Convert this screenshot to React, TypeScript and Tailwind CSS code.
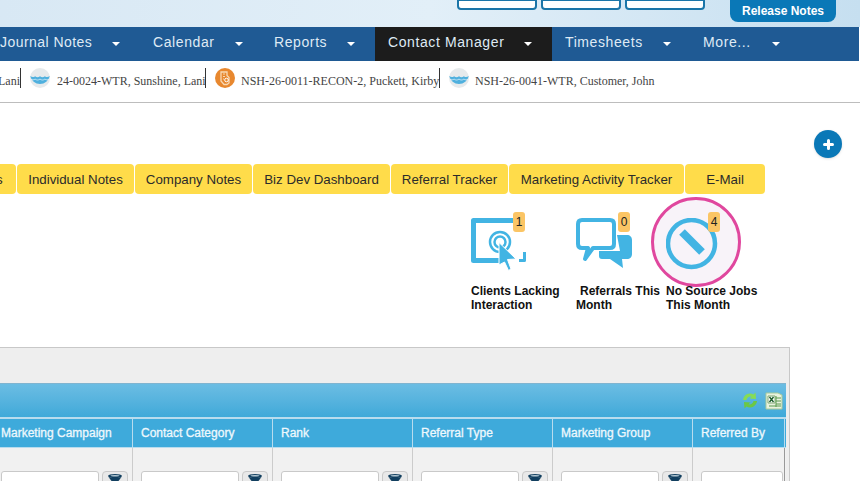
const navItems = [
  { label: "Journal Notes", className: "w-[139px] tracking-[0.45px]", caretGap: "ml-[20px]" },
  { label: "Calendar", className: "w-[122px] pl-[14px] tracking-[0.6px]", caretGap: "ml-[20px]" },
  { label: "Reports", className: "w-[114px] pl-[13px] tracking-[0.6px]", caretGap: "ml-[20px]" },
  { label: "Contact Manager", className: "w-[177px] pl-[13px] tracking-[0.6px] bg-[#1c1c1c]", caretGap: "ml-[20px]" },
  { label: "Timesheets", className: "w-[138px] pl-[13px] tracking-[0.6px]", caretGap: "ml-[20px]" },
  { label: "More...", className: "w-[169px] pl-[13px] tracking-[0.6px]", caretGap: "ml-[21px]" },
];

const tabs = [
  { label: "s", width: "w-[16px] justify-start -indent-[4px] rounded-l-none" },
  { label: "Individual Notes", width: "w-[117px] justify-center" },
  { label: "Company Notes", width: "w-[117px] justify-center" },
  { label: "Biz Dev Dashboard", width: "w-[137px] justify-center" },
  { label: "Referral Tracker", width: "w-[117px] justify-center" },
  { label: "Marketing Activity Tracker", width: "w-[175px] justify-center" },
  { label: "E-Mail", width: "w-[80px] justify-center" },
];

const columns = [
  { label: "Marketing Campaign", filter: true, width: "w-[133px] pl-[1px]" },
  { label: "Contact Category", filter: true, width: "w-[140px] pl-[8px]" },
  { label: "Rank", filter: true, width: "w-[140px] pl-[8px]" },
  { label: "Referral Type", filter: true, width: "w-[140px] pl-[8px]" },
  { label: "Marketing Group", filter: true, width: "w-[140px] pl-[8px]" },
  { label: "Referred By", filter: false, width: "w-[92px] pl-[8px]" },
];

function WaterIcon() {
  return (
    <svg width="20" height="20" viewBox="0 0 20 20" className="shrink-0">
      <circle cx="10" cy="10" r="10" fill="#e6eaec" />
      <path d="M.2 8c1.900 1.400 3.300 1.400 4.900.2 1.600 1.300 3.200 1.300 4.900 0 1.700 1.300 3.300 1.300 4.900 0 1.600 1.200 3 1.200 4.900-.2a10 10 0 0 1-19.600 0z" fill="#4fb0de" />
      <path d="M1 11.200c1.500.9 2.800.8 4.100-.1 1.600 1.200 3.200 1.200 4.900 0 1.700 1.200 3.300 1.200 4.900 0 1.300.9 2.600 1 4.100.1" fill="none" stroke="#e9f5fb" strokeWidth="0.700" />
    </svg>
  );
}

function ReconIcon() {
  return (
    <svg width="20" height="20" viewBox="0 0 20 20" className="shrink-0">
      <circle cx="10" cy="10" r="10" fill="#e8882f" />
      <path d="M6 4h6v3.500l2 2V15l-2 1.500H9L6 13z" fill="none" stroke="#f8d9b4" strokeWidth="1.300" />
      <path d="M8 6h2M8 8.500h2M8 11h1" stroke="#f8d9b4" strokeWidth="1.100" />
      <circle cx="11.500" cy="12" r="1.800" fill="none" stroke="#fff" strokeWidth="1" />
    </svg>
  );
}

function Caret() {
  return <span className="inline-block w-0 h-0 mt-[3px] border-x-[4px] border-x-transparent border-t-[4px] border-t-white" />;
}

function FilterButton() {
  return (
    <div className="w-[26px] h-[12px] overflow-hidden rounded-t-[4px] border border-[#c9c9c9] bg-[#e9e9e9] flex justify-center pt-[2px]">
      <svg width="16" height="10" viewBox="0 0 16 10">
        <ellipse cx="8" cy="2" rx="7" ry="2" fill="#123f5f" />
        <ellipse cx="8" cy="1.800" rx="4.500" ry="0.800" fill="#b7cbd6" />
        <path d="M1.500 3c2 1 11 1 13 0L10 9H6z" fill="#123f5f" />
      </svg>
    </div>
  );
}

function ClientsIcon() {
  return (
    <svg width="56" height="53" viewBox="0 0 56 53">
      <path d="M33 42.500H2.500V2.500H44" fill="none" stroke="#42b4e3" strokeWidth="5" strokeLinejoin="round" />
      <path d="M53.500 34v8.500H48" fill="none" stroke="#42b4e3" strokeWidth="3" strokeLinejoin="round" />
      <circle cx="29" cy="24" r="10" fill="none" stroke="#42b4e3" strokeWidth="2.500" />
      <circle cx="29" cy="24" r="5.500" fill="none" stroke="#42b4e3" strokeWidth="2.500" />
      <path d="M28 24.500L45 41l-8.500.5L40 51l-2.500 1.500-4-8.500-5.500 3z" fill="#42b4e3" stroke="#fff" strokeWidth="1" strokeLinejoin="round" />
    </svg>
  );
}

function ReferralsIcon() {
  return (
    <svg width="58" height="52" viewBox="0 0 58 52">
      <path d="M41 17h10c3 0 5 2 5 5v14c0 3-2 5-5 5h-5l1 9-13-9h-8c-2 0-3-1-3-3v-5h21z" fill="#42b4e3" />
      <path d="M6 2h28c2.500 0 4 1.500 4 4v20c0 2.500-1.500 4-4 4H17L9 41l3-11H6c-2.500 0-4-1.500-4-4V6c0-2.500 1.500-4 4-4z" fill="#fff" stroke="#fff" strokeWidth="6" strokeLinejoin="round" />
      <path d="M6 2h28c2.500 0 4 1.500 4 4v20c0 2.500-1.500 4-4 4H17L9 41l3-11H6c-2.500 0-4-1.500-4-4V6c0-2.500 1.500-4 4-4z" fill="#fff" stroke="#42b4e3" strokeWidth="4" strokeLinejoin="round" />
    </svg>
  );
}

function NoSourceIcon() {
  return (
    <svg width="52" height="52" viewBox="0 0 52 52">
      <circle cx="25.500" cy="25.500" r="23.500" fill="none" stroke="#42b4e3" strokeWidth="4.500" />
      <path d="M16 14l20 20" stroke="#42b4e3" strokeWidth="8" />
    </svg>
  );
}

function Badge({ value }: { value: number }) {
  return (
    <span className="w-[12px] h-[20px] rounded-[3px] bg-[#fbc565] flex items-center justify-center text-[12px] leading-none font-normal text-[#222]">
      {value}
    </span>
  );
}

export default function App() {
  return (
    <div className="relative w-[860px] h-[481px] overflow-hidden bg-white font-['Liberation_Sans',Arial,sans-serif]">
      <header className="h-[27px] bg-gradient-to-r from-[#d8e8f4] via-[#e2eff8] to-[#c6dff0] flex justify-start items-start pl-[457px]">
        <div className="w-[80px] h-[11px] -mt-px bg-white border-2 border-[#1a75a8] rounded-b-[4px]" />
        <div className="w-[80px] h-[11px] -mt-px ml-[4px] bg-white border-2 border-[#1a75a8] rounded-b-[4px]" />
        <div className="w-[80px] h-[11px] -mt-px ml-[4px] bg-white border-2 border-[#1a75a8] rounded-b-[4px]" />
        <button className="w-[106px] h-[22px] ml-[25px] rounded-b-[8px] bg-[#0a78b7] text-white text-[12px] font-bold">Release Notes</button>
      </header>

      <nav className="h-[34px] w-[859px] bg-[#1f5a94] flex items-center">
        {navItems.map((item) => (
          <div key={item.label} className={`h-full flex items-center pb-[4px] text-[14px] text-[#dfeaf4] ${item.className}`}>
            <span>{item.label}</span>
            <span className={`flex ${item.caretGap}`}><Caret /></span>
          </div>
        ))}
      </nav>

      <div className="h-[42px] border-b border-[#bdbdbd] flex items-start pt-[7px] whitespace-nowrap font-['Liberation_Serif',serif] text-[12px] text-[#444]">
        <div className="w-[21px] h-[20px] border-r border-[#333] flex items-center justify-end pt-[6px] leading-none">Lani</div>
        <div className="ml-[9px] flex items-center gap-[7px] w-[176px] h-[20px] border-r border-[#333]">
          <WaterIcon />
          <span className="pt-[6px]">24-0024-WTR, Sunshine, Lani</span>
        </div>
        <div className="ml-[9px] flex items-center gap-[6px] w-[225px] h-[20px] border-r border-[#333]">
          <ReconIcon />
          <span className="pt-[6px]">NSH-26-0011-RECON-2, Puckett, Kirby</span>
        </div>
        <div className="ml-[9px] flex items-center gap-[6px] h-[20px]">
          <WaterIcon />
          <span className="pt-[6px]">NSH-26-0041-WTR, Customer, John</span>
        </div>
      </div>

      <button className="absolute left-[814px] top-[130px] w-[28px] h-[28px] rounded-full bg-[#0a78b7] shadow flex items-center justify-center" aria-label="Add">
        <svg width="11" height="11" viewBox="0 0 11 11"><path d="M5.500 1.500v8M1.500 5.500h8" stroke="#fff" strokeWidth="3" strokeLinecap="round" /></svg>
      </button>

      <div className="mt-[61px] h-[30px] flex gap-px">
        {tabs.map((tab) => (
          <div key={tab.label} className={`h-full flex items-center pt-px rounded-[4px] bg-[#ffdc4a] text-[13.3px] text-[#2b2b2b] ${tab.width}`}>
            {tab.label}
          </div>
        ))}
      </div>

      <div className="relative h-[153px]">
        <div className="absolute left-[651px] top-[3px] w-[90px] h-[90px] rounded-full bg-[#f8f3f9] border-[3px] border-[#e0479e]" />
        <div className="relative flex text-[12px] leading-[14px] font-bold text-[#111]">
          <div className="ml-[471px] w-[100px] pt-[24px]">
            <div className="relative h-[52px]">
              <ClientsIcon />
              <div className="absolute left-[42px] top-[-6px]"><Badge value={1} /></div>
            </div>
            <p className="mt-[14px]">Clients Lacking Interaction</p>
          </div>
          <div className="ml-[5px] w-[90px] pt-[24px]">
            <div className="relative h-[52px]">
              <ReferralsIcon />
              <div className="absolute left-[42px] top-[-6px]"><Badge value={0} /></div>
            </div>
            <p className="mt-[14px] indent-[4px]">Referrals This Month</p>
          </div>
          <div className="w-[100px] pt-[24px]">
            <div className="relative h-[52px]">
              <NoSourceIcon />
              <div className="absolute left-[42px] top-[-6px]"><Badge value={4} /></div>
            </div>
            <p className="mt-[14px]">No Source Jobs This Month</p>
          </div>
        </div>
      </div>

      <section className="w-[790px] h-[134px] bg-[#eeeeee] border-t border-r border-[#c8c8c8] pt-[35px] pr-[3px]">
        <div className="h-[34px] bg-gradient-to-b from-[#6bbde3] to-[#3fa9d9] border-t border-[#7fb4d0] flex items-center justify-end pr-[3px] gap-[6px]">
          <svg width="18" height="19" viewBox="0 0 18 19">
            <path d="M2 9a7 7 0 0 1 10.500-5.500L14.500 1.500 15 8l-6.500-.5 2-1.800A4 4 0 0 0 5.500 9z" fill="#86dc55" />
            <path d="M16 10a7 7 0 0 1-10.500 5.500L3.500 17.500 3 11l6.500.5-2 1.800A4 4 0 0 0 12.500 10z" fill="#6cc845" />
          </svg>
          <svg width="18" height="19" viewBox="0 0 18 19">
            <path d="M1 2h12l4 2v14H1z" fill="#e9f2de" stroke="#a7c99a" />
            <path d="M3 5h7v7H3z" fill="#fff" stroke="#7fa873" />
            <path d="M4.500 6l4 5M8.500 6l-4 5" stroke="#1c5c2a" strokeWidth="1.400" />
            <path d="M11 7h5M11 10h5M11 13h5M4 15h12M11 5v11" stroke="#5a9a4e" strokeWidth="1" />
          </svg>
        </div>
        <div className="flex h-[31px] bg-[#3eaadb] border-t-2 border-b border-[#b8dcee] text-[12px] text-[#eef8fd] [-webkit-text-stroke:0.3px_#eef8fd]">
          {columns.map((col) => (
            <div key={col.label} className={`flex items-center border-r border-[#b8dcee] ${col.width}`}>{col.label}</div>
          ))}
        </div>
        <div className="flex h-[33px] bg-[#f1f1f1] overflow-hidden">
          {columns.map((col) => (
            <div key={col.label} className={`flex items-start gap-[3px] pt-[23px] border-r ${col.width} ${col.filter ? "border-[#cccccc]" : "border-[#999999]"}`}>
              <div className={`${col.filter ? "w-[98px]" : "w-[82px]"} h-[12px] bg-white border border-[#c9c9c9] rounded-t-[3px]`} />
              {col.filter && <FilterButton />}
            </div>
          ))}
        </div>
      </section>
    </div>
  );
}
